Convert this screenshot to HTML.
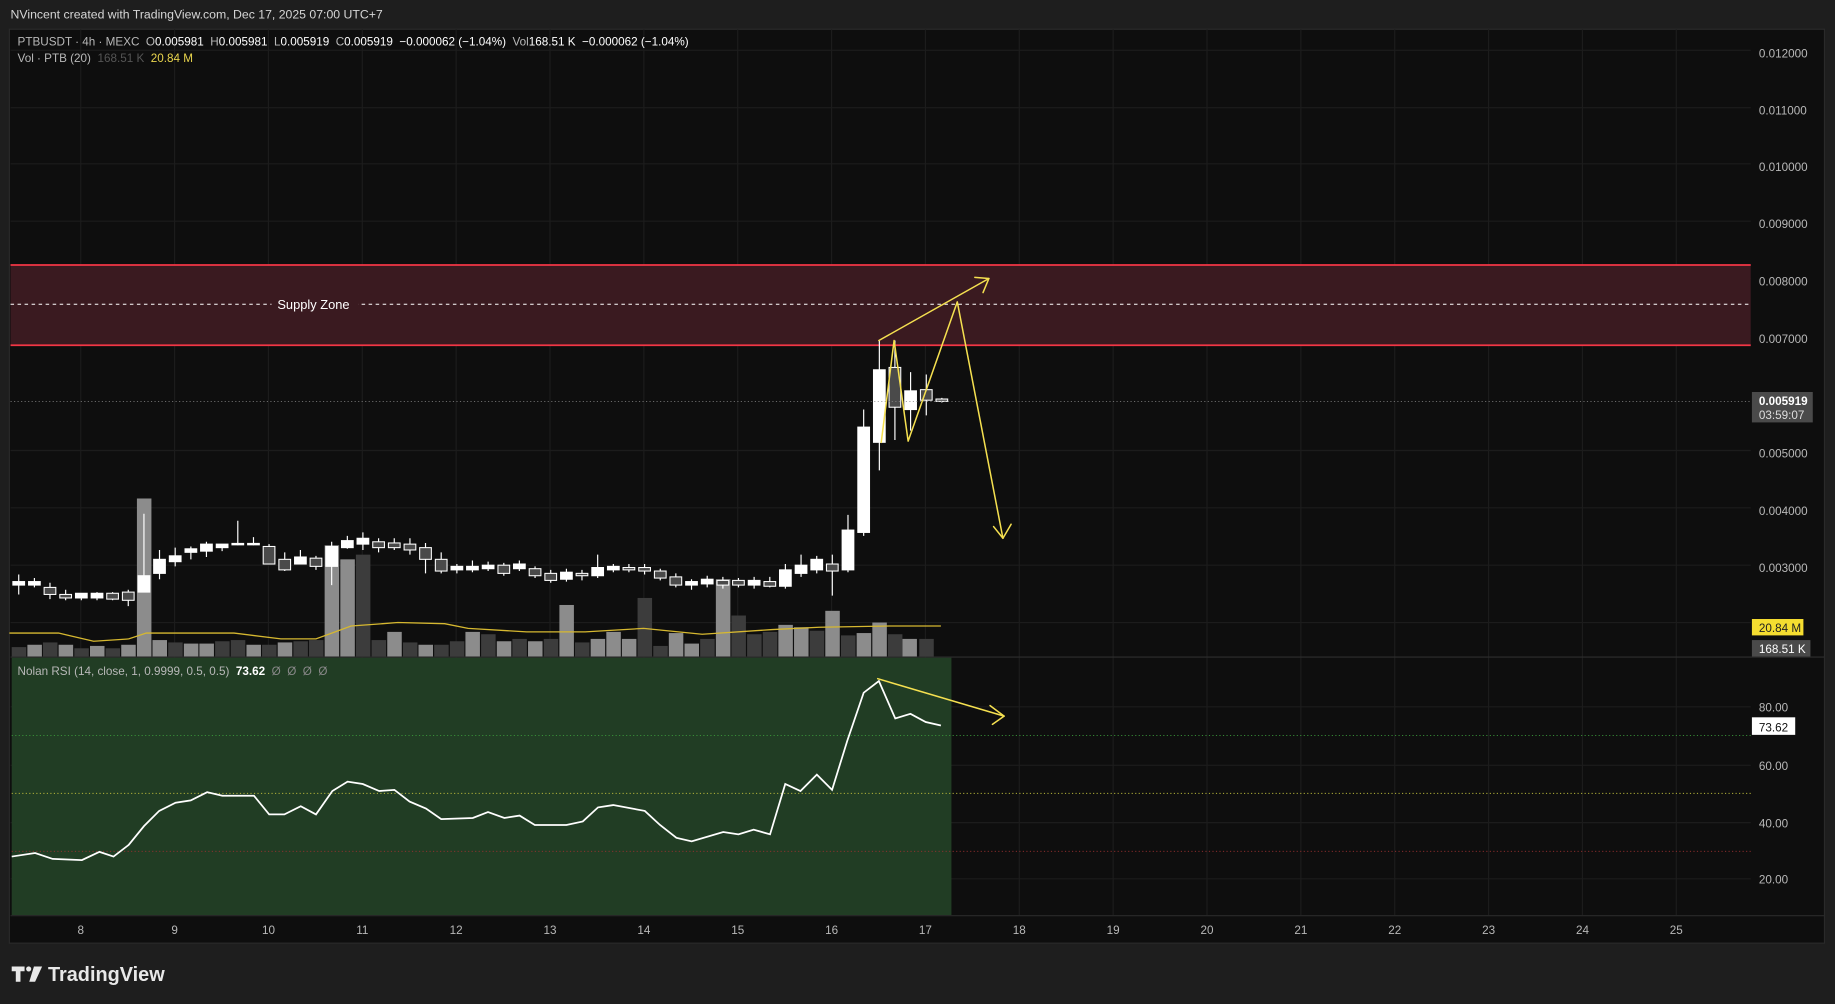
<!DOCTYPE html>
<html><head><meta charset="utf-8">
<style>
html,body{margin:0;padding:0;background:#1e1e1e;width:1835px;height:1004px;overflow:hidden}
svg{display:block}
text{font-family:"Liberation Sans",sans-serif}
</style></head>
<body>
<svg width="1835" height="1004" viewBox="0 0 1568 858" preserveAspectRatio="none" xmlns="http://www.w3.org/2000/svg">
<rect x="0" y="0" width="1568" height="858" fill="#1e1e1e"/>
<text x="9" y="16" fill="#d6d6d6" font-size="10.5">NVincent created with TradingView.com, Dec 17, 2025 07:00 UTC+7</text>
<rect x="8" y="25" width="1551" height="781" fill="#0e0e0e" stroke="#2a2a2a" stroke-width="1"/>
<!-- grid -->
<g stroke="#1c1c1c" stroke-width="1">
<path d="M69 25V782M149.2 25V782M229.4 25V782M309.6 25V782M389.8 25V782M470 25V782M550.2 25V782M630.4 25V782M710.6 25V782M790.8 25V782M871 25V782M951.2 25V782M1031.4 25V782M1111.6 25V782M1191.8 25V782M1272 25V782M1352.2 25V782M1432.4 25V782"/>
<path d="M9 43H1496M9 92H1496M9 140H1496M9 189H1496M9 238H1496M9 287H1496M9 385H1496M9 434H1496M9 483H1496M9 532H1496M9 604H1496M9 654H1496M9 703H1496M9 751H1496"/>
</g>
<!-- supply zone -->
<rect x="9" y="226" width="1487" height="69" fill="#3a1a20"/>
<line x1="9" y1="226.5" x2="1496" y2="226.5" stroke="#f23645" stroke-width="1.5"/>
<line x1="9" y1="295" x2="1496" y2="295" stroke="#f23645" stroke-width="1.5"/>
<line x1="9" y1="260" x2="1496" y2="260" stroke="#ffffff" stroke-width="0.8" stroke-dasharray="3,3"/>
<rect x="232" y="253" width="74" height="14" fill="#3a1a20"/>
<text x="237" y="264" fill="#ffffff" font-size="11">Supply Zone</text>
<!-- RSI pane -->
<rect x="10" y="562" width="803" height="220" fill="#213d24"/>
<line x1="9" y1="561.5" x2="1559" y2="561.5" stroke="#2e2e2e"/>
<line x1="10" y1="628.5" x2="1496" y2="628.5" stroke="#3b9a3b" stroke-width="0.8" stroke-dasharray="1,2"/>
<line x1="10" y1="678" x2="1496" y2="678" stroke="#b5b53a" stroke-width="0.8" stroke-dasharray="1,2"/>
<line x1="10" y1="727.5" x2="1496" y2="727.5" stroke="#9a3030" stroke-width="0.8" stroke-dasharray="1,2"/>
<line x1="9" y1="782.5" x2="1559" y2="782.5" stroke="#2a2a2a"/>
<!-- volume -->
<g fill="#8c8c8c">
<rect x="23.4" y="551" width="12.4" height="10"/><rect x="50.1" y="551" width="12.4" height="10"/><rect x="76.9" y="552" width="12.4" height="9"/><rect x="103.6" y="551" width="12.4" height="10"/><rect x="117" y="426" width="12.4" height="135"/><rect x="130.3" y="547" width="12.4" height="14"/><rect x="157.1" y="550" width="12.4" height="11"/><rect x="170.4" y="550" width="12.4" height="11"/><rect x="210.6" y="551" width="12.4" height="10"/><rect x="237.3" y="549" width="12.4" height="12"/><rect x="277.4" y="466" width="12.4" height="95"/><rect x="290.8" y="478" width="12.4" height="83"/><rect x="330.9" y="540" width="12.4" height="21"/><rect x="357.6" y="551" width="12.4" height="10"/><rect x="397.7" y="540" width="12.4" height="21"/><rect x="424.5" y="548" width="12.4" height="13"/><rect x="451.2" y="548" width="12.4" height="13"/><rect x="478" y="517" width="12.4" height="44"/><rect x="504.7" y="546" width="12.4" height="15"/><rect x="518.1" y="540" width="12.4" height="21"/><rect x="531.4" y="546" width="12.4" height="15"/><rect x="571.5" y="541" width="12.4" height="20"/><rect x="584.9" y="550" width="12.4" height="11"/><rect x="611.7" y="495" width="12.4" height="66"/><rect x="665.1" y="534" width="12.4" height="27"/><rect x="678.5" y="536" width="12.4" height="25"/><rect x="705.2" y="522" width="12.4" height="39"/><rect x="732" y="541" width="12.4" height="20"/><rect x="745.4" y="532" width="12.4" height="29"/><rect x="771.1" y="546" width="12.4" height="15"/>
</g>
<g fill="#3c3c3c">
<rect x="10" y="553" width="12.4" height="8"/><rect x="36.7" y="549" width="12.4" height="12"/><rect x="63.5" y="554" width="12.4" height="7"/><rect x="90.2" y="554" width="12.4" height="7"/><rect x="143.7" y="549" width="12.4" height="12"/><rect x="183.8" y="548" width="12.4" height="13"/><rect x="197.2" y="547" width="12.4" height="14"/><rect x="223.9" y="551" width="12.4" height="10"/><rect x="250.7" y="548" width="12.4" height="13"/><rect x="264" y="547" width="12.4" height="14"/><rect x="304.1" y="474" width="12.4" height="87"/><rect x="317.5" y="547" width="12.4" height="14"/><rect x="344.3" y="549" width="12.4" height="12"/><rect x="371" y="551" width="12.4" height="10"/><rect x="384.4" y="548" width="12.4" height="13"/><rect x="411.1" y="542" width="12.4" height="19"/><rect x="437.8" y="546" width="12.4" height="15"/><rect x="464.6" y="546" width="12.4" height="15"/><rect x="491.3" y="549" width="12.4" height="12"/><rect x="544.8" y="511" width="12.4" height="50"/><rect x="558.2" y="552" width="12.4" height="9"/><rect x="598.3" y="546" width="12.4" height="15"/><rect x="625" y="526" width="12.4" height="35"/><rect x="638.4" y="542" width="12.4" height="19"/><rect x="651.8" y="540" width="12.4" height="21"/><rect x="691.9" y="539" width="12.4" height="22"/><rect x="718.6" y="543" width="12.4" height="18"/><rect x="758.7" y="542" width="12.4" height="19"/><rect x="785.5" y="546" width="12.4" height="15"/>
</g>
<polyline points="8,541 50,541 80,548 110,546 125,541 200,541 240,546 270,546 300,535 340,532 380,533 400,537 450,540 500,540 550,537 600,542 660,538 700,536 760,535 804,535" fill="none" stroke="#d6b830" stroke-width="1.1"/>
<!-- wicks -->
<path stroke="#fff" stroke-width="1" fill="none" d="M16 491V508M29.4 494V502M42.7 498V512M56.1 504V513M69.5 507V513M82.9 506V513M96.2 506V513M109.6 504V518M123 439V506M136.3 470V495M149.7 468V484M163.1 467V478M176.4 463V476M189.8 465V471M203.2 445V466M216.6 459V466M229.9 465V482M243.3 472V488M256.7 470V482M270 475V487M283.4 463V500M296.8 458V469M310.1 455V470M323.5 460V472M336.9 460V470M350.3 460V474M363.6 464V490M377 472V490M390.4 482V490M403.7 479V489M417.1 480V488M430.5 481V492M443.8 479V488M457.2 484V494M470.6 487V498M484 486V497M497.3 487V496M510.7 474V494M524.1 482V489M537.4 482V489M550.8 482V491M564.2 486V496M577.5 490V502M590.9 495V504M604.3 492V502M617.7 493V503M631 494V502M644.4 493V503M657.8 493V502M671.1 482V503M684.5 474V493M697.9 475V490M711.2 474V509M724.6 440V489M738 350V458M751.4 291V402M764.7 291V376M778.1 318V368M791.5 320V355M804.8 340V344"/>
<!-- bodies -->
<g stroke="#fff" stroke-width="0.9">
<g fill="#ffffff">
<rect x="11" y="497" width="10" height="3"/><rect x="24.4" y="497" width="10" height="3"/><rect x="64.5" y="507" width="10" height="4"/><rect x="77.9" y="507" width="10" height="4"/><rect x="118" y="492" width="10" height="14"/><rect x="131.3" y="478" width="10" height="12"/><rect x="144.7" y="475" width="10" height="5"/><rect x="158.1" y="469" width="10" height="3"/><rect x="171.4" y="465" width="10" height="6"/><rect x="184.8" y="465" width="10" height="3"/><rect x="198.2" y="464.4" width="10" height="1.2"/><rect x="211.6" y="464.4" width="10" height="1.2"/><rect x="251.7" y="476" width="10" height="6"/><rect x="278.4" y="467" width="10" height="17"/><rect x="291.8" y="462" width="10" height="6"/><rect x="305.1" y="460" width="10" height="5"/><rect x="385.4" y="484" width="10" height="3"/><rect x="398.7" y="484" width="10" height="3"/><rect x="412.1" y="483" width="10" height="3"/><rect x="438.8" y="482" width="10" height="4"/><rect x="479" y="489" width="10" height="6"/><rect x="505.7" y="485" width="10" height="7"/><rect x="519.1" y="484" width="10" height="3"/><rect x="585.9" y="497" width="10" height="3"/><rect x="599.3" y="495" width="10" height="4"/><rect x="639.4" y="496" width="10" height="4"/><rect x="666.1" y="487" width="10" height="14"/><rect x="679.5" y="483" width="10" height="7"/><rect x="692.9" y="478" width="10" height="9"/><rect x="719.6" y="453" width="10" height="34"/><rect x="733" y="365" width="10" height="90"/><rect x="746.4" y="316" width="10" height="62"/><rect x="773.1" y="334" width="10" height="16"/>
</g>
<g fill="#4a4a4a">
<rect x="37.7" y="502" width="10" height="6"/><rect x="51.1" y="508" width="10" height="3"/><rect x="91.2" y="507" width="10" height="5"/><rect x="104.6" y="506" width="10" height="7"/><rect x="224.9" y="467" width="10" height="15"/><rect x="238.3" y="478" width="10" height="9"/><rect x="265" y="477" width="10" height="7"/><rect x="318.5" y="463" width="10" height="5"/><rect x="331.9" y="464" width="10" height="4"/><rect x="345.3" y="465" width="10" height="5"/><rect x="358.6" y="468" width="10" height="10"/><rect x="372" y="478" width="10" height="10"/><rect x="425.5" y="483" width="10" height="7"/><rect x="452.2" y="486" width="10" height="6"/><rect x="465.6" y="490" width="10" height="6"/><rect x="492.3" y="490" width="10" height="2"/><rect x="532.4" y="485" width="10" height="2"/><rect x="545.8" y="485" width="10" height="3"/><rect x="559.2" y="488" width="10" height="6"/><rect x="572.5" y="493" width="10" height="7"/><rect x="612.7" y="496" width="10" height="4"/><rect x="626" y="496" width="10" height="4"/><rect x="652.8" y="497" width="10" height="4"/><rect x="706.2" y="482" width="10" height="6"/><rect x="759.7" y="314" width="10" height="34"/><rect x="786.5" y="333" width="10" height="9"/><rect x="799.8" y="341" width="10" height="2"/>
</g>
</g>
<line x1="9" y1="343" x2="1496" y2="343" stroke="#888" stroke-width="0.7" stroke-dasharray="1,2"/>
<polyline fill="none" stroke="#ffffff" stroke-width="1.5" points="10,732 30,729 45,734 70,735 85,728 97,732 110,722 123,706 136,693 150,686 163,684 177,677 190,680 217,680 230,696 243,696 257,689 270,696 284,676 297,668 310,670 324,676 337,675 350,685 364,691 377,700 404,699 417,694 431,699 444,697 457,705 484,705 498,702 511,690 524,688 551,693 564,705 578,716 591,719 618,711 631,713 644,709 658,713 671,670 684,676 698,662 711,675 724,633 738,592 751,582 765,614 778,610 791,617 804,620"/>
<!-- yellow drawings -->
<g fill="none" stroke="#f5e050" stroke-width="1.3" stroke-linecap="round" stroke-linejoin="round">
<polyline points="751,291 845,238"/>
<polyline points="833,237 845,238 840,250"/>
<polyline points="753,378 764,291 776,377 818,258 857,460"/>
<polyline points="849,450 857,460 864,448"/>
<polyline points="750,580 858,612"/>
<polyline points="846,603 858,612 848,619"/>
</g>
<!-- legend -->
<text x="15" y="39" font-size="10" fill="#b8b8b8" xml:space="preserve">PTBUSDT · 4h · MEXC  O<tspan fill="#fff">0.005981</tspan>  H<tspan fill="#fff">0.005981</tspan>  L<tspan fill="#fff">0.005919</tspan>  C<tspan fill="#fff">0.005919</tspan>  <tspan fill="#fff">−0.000062 (−1.04%)</tspan>  Vol<tspan fill="#fff">168.51 K</tspan>  <tspan fill="#fff">−0.000062 (−1.04%)</tspan></text>
<text x="15" y="53" font-size="10" fill="#b8b8b8" xml:space="preserve">Vol · PTB (20)  <tspan fill="#555">168.51 K</tspan>  <tspan fill="#e8d44d">20.84 M</tspan></text>
<text x="15" y="577" font-size="10" fill="#b8b8b8" xml:space="preserve">Nolan RSI (14, close, 1, 0.9999, 0.5, 0.5)  <tspan fill="#fff" font-weight="bold">73.62</tspan>  <tspan fill="#888">Ø  Ø  Ø  Ø</tspan></text>
<!-- axis -->
<g font-size="10" fill="#b8b8b8">
<text x="1503" y="49">0.012000</text><text x="1503" y="98">0.011000</text><text x="1503" y="146">0.010000</text><text x="1503" y="195">0.009000</text><text x="1503" y="244">0.008000</text><text x="1503" y="293">0.007000</text><text x="1503" y="391">0.005000</text><text x="1503" y="440">0.004000</text><text x="1503" y="489">0.003000</text>
<text x="1503" y="608">80.00</text><text x="1503" y="658">60.00</text><text x="1503" y="707">40.00</text><text x="1503" y="755">20.00</text>
<g text-anchor="middle">
<text x="69" y="798">8</text><text x="149.2" y="798">9</text><text x="229.4" y="798">10</text><text x="309.6" y="798">11</text><text x="389.8" y="798">12</text><text x="470" y="798">13</text><text x="550.2" y="798">14</text><text x="630.4" y="798">15</text><text x="710.6" y="798">16</text><text x="790.8" y="798">17</text><text x="871" y="798">18</text><text x="951.2" y="798">19</text><text x="1031.4" y="798">20</text><text x="1111.6" y="798">21</text><text x="1191.8" y="798">22</text><text x="1272" y="798">23</text><text x="1352.2" y="798">24</text><text x="1432.4" y="798">25</text>
</g>
</g>
<rect x="1497" y="335" width="52" height="26" fill="#4a4a4a"/>
<text x="1503" y="346" font-size="10" fill="#fff" font-weight="bold">0.005919</text>
<text x="1503" y="358" font-size="10" fill="#ddd">03:59:07</text>
<rect x="1497" y="529" width="44" height="14" fill="#f5dd30"/>
<text x="1503" y="540" font-size="10" fill="#222">20.84 M</text>
<rect x="1497" y="547" width="50" height="14" fill="#4a4a4a"/>
<text x="1503" y="558" font-size="10" fill="#fff">168.51 K</text>
<rect x="1497" y="613" width="37" height="15" fill="#fff"/>
<text x="1503" y="625" font-size="10" fill="#111">73.62</text>
<!-- footer logo -->
<g fill="#e8e8e8">
<path d="M10 826 h11 v4 h-3.5 v9 h-4 v-9 h-3.5z"/>
<circle cx="24.5" cy="828" r="2.2"/>
<path d="M29 826 h7 l-6 13 h-5z"/>
</g>
<text x="41" y="838.5" font-size="17" font-weight="bold" fill="#e8e8e8">TradingView</text>
</svg>
</body></html>
